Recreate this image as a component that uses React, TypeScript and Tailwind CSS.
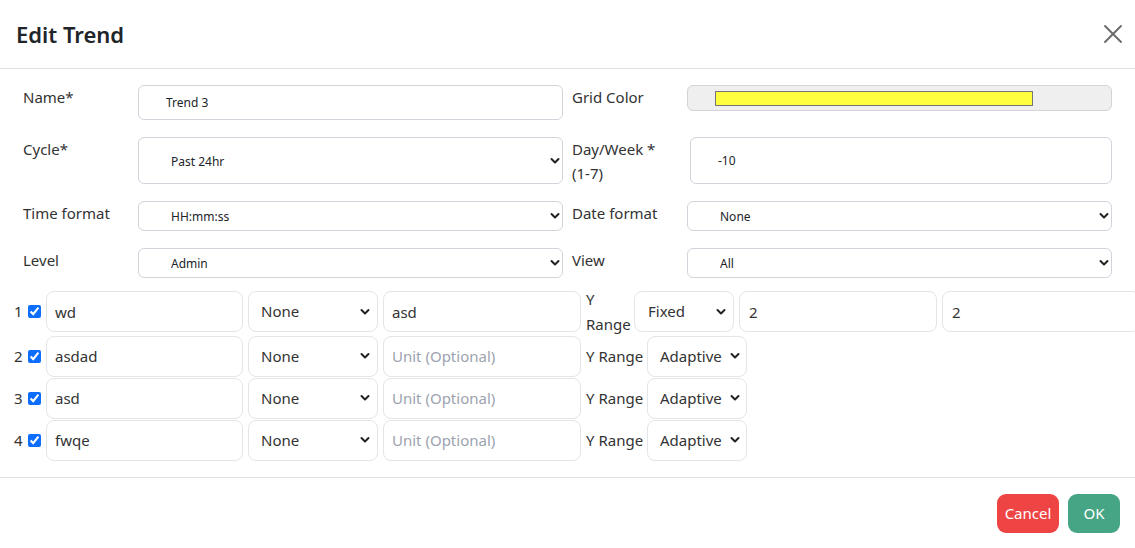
import { X } from "lucide-react";

function Chevron({ className }: { className?: string }) {
  return (
    <svg
      className={className}
      width="10"
      height="7"
      viewBox="0 0 10 7"
      fill="none"
    >
      <path
        d="M1.5 1.5 L5 5 L8.5 1.5"
        stroke="#222"
        strokeWidth="2"
        strokeLinecap="round"
        strokeLinejoin="round"
      />
    </svg>
  );
}

type SelectProps = {
  value: string;
  options: string[];
  className: string;
  selectClass: string;
  chevronClass: string;
};

function Select({ value, options, className, selectClass, chevronClass }: SelectProps) {
  return (
    <div className={`relative shrink-0 ${className}`}>
      <select
        defaultValue={value}
        className={`h-full w-full appearance-none bg-white outline-none ${selectClass}`}
      >
        {options.map((o) => (
          <option key={o} value={o}>
            {o}
          </option>
        ))}
      </select>
      <Chevron className={`pointer-events-none absolute top-1/2 -translate-y-1/2 ${chevronClass}`} />
    </div>
  );
}

const topSelect = "rounded-md border border-[#d1d5db] pl-[32px] pt-[2px] text-[12px] text-[#212529]";
const chanInput =
  "h-[41px] shrink-0 rounded-lg border border-[#e3e5e8] bg-white text-[15px] text-[#333] outline-none placeholder:text-[#9ca3af]";
const chanSelect = "rounded-lg border border-[#e3e5e8] text-[15px] text-[#333]";

type Channel = {
  id: number;
  name: string;
  unit: string;
  range: string;
  min?: string;
  max?: string;
};

const channels: Channel[] = [
  { id: 1, name: "wd", unit: "asd", range: "Fixed", min: "2", max: "2" },
  { id: 2, name: "asdad", unit: "", range: "Adaptive" },
  { id: 3, name: "asd", unit: "", range: "Adaptive" },
  { id: 4, name: "fwqe", unit: "", range: "Adaptive" },
];

export default function App() {
  return (
    <div className="flex h-[548px] w-[1135px] flex-col overflow-hidden bg-white font-['Noto_Sans','Open_Sans',sans-serif] text-[#333]">
      {/* Header */}
      <div className="flex h-[69px] shrink-0 items-center justify-between border-b border-[#dee2e6] pl-[16px] pr-[6px]">
        <h1 className="text-[22px] font-semibold text-[#212529]">Edit Trend</h1>
        <X className="h-[32px] w-[32px] text-[#6b6b6b]" strokeWidth={1.4} />
      </div>

      {/* Body */}
      <div className="flex flex-col gap-[17px] px-[23px] pt-[16px] text-[15px] leading-[24px]">
        <div className="flex h-[35px] items-start">
          <div className="w-[115px] shrink-0">Name*</div>
          <input
            defaultValue="Trend 3"
            className="h-[35px] w-[425px] shrink-0 rounded-md border border-[#d1d5db] pl-[27px] text-[12px] text-[#212529] outline-none"
          />
          <div className="ml-[9px] w-[115px] shrink-0">Grid Color</div>
          <div className="flex h-[26px] w-[425px] shrink-0 items-center rounded-md border border-[#d4d4d8] bg-[#efefef] pl-[27px]">
            <div className="h-[15px] w-[318px] border border-[#767676] bg-[#ffff40]" />
          </div>
        </div>

        <div className="flex h-[47px] items-start">
          <div className="w-[115px] shrink-0">Cycle*</div>
          <Select
            value="Past 24hr"
            options={["Past 24hr", "Past week"]}
            className="h-[47px] w-[425px]"
            selectClass={topSelect}
            chevronClass="right-[3px]"
          />
          <div className="ml-[9px] w-[118px] shrink-0">
            Day/Week *<br />
            (1-7)
          </div>
          <input
            defaultValue="-10"
            className="h-[47px] w-[422px] shrink-0 rounded-md border border-[#d1d5db] pl-[27px] text-[12px] text-[#212529] outline-none"
          />
        </div>

        <div className="flex h-[30px] items-start">
          <div className="w-[115px] shrink-0">Time format</div>
          <Select
            value="HH:mm:ss"
            options={["HH:mm:ss", "HH:mm"]}
            className="h-[30px] w-[425px]"
            selectClass={topSelect}
            chevronClass="right-[3px]"
          />
          <div className="ml-[9px] w-[115px] shrink-0">Date format</div>
          <Select
            value="None"
            options={["None", "YYYY-MM-DD"]}
            className="h-[30px] w-[425px]"
            selectClass={topSelect}
            chevronClass="right-[3px]"
          />
        </div>

        <div className="flex h-[30px] items-start">
          <div className="w-[115px] shrink-0">Level</div>
          <Select
            value="Admin"
            options={["Admin", "User"]}
            className="h-[30px] w-[425px]"
            selectClass={topSelect}
            chevronClass="right-[3px]"
          />
          <div className="ml-[9px] w-[115px] shrink-0">View</div>
          <Select
            value="All"
            options={["All", "Mine"]}
            className="h-[30px] w-[425px]"
            selectClass={topSelect}
            chevronClass="right-[3px]"
          />
        </div>
      </div>

      {/* Channels */}
      <div className="mt-[10px] flex flex-col pl-[14px] text-[15px]">
        {channels.map((c) => (
          <div
            key={c.id}
            className={`flex items-center gap-[5px] ${c.id === 1 ? "h-[47px]" : "h-[42px]"}`}
          >
            <span className="w-[9px] shrink-0 text-[15px]">{c.id}</span>
            <input
              type="checkbox"
              defaultChecked
              className="h-[13px] w-[13px] shrink-0 accent-[#0d6efd]"
            />
            <input defaultValue={c.name} className={`${chanInput} w-[197px] pl-[8px]`} />
            <Select
              value="None"
              options={["None", "Avg"]}
              className="h-[41px] w-[130px]"
              selectClass={`${chanSelect} pl-[12px]`}
              chevronClass="right-[8px]"
            />
            <input
              defaultValue={c.unit}
              placeholder="Unit (Optional)"
              className={`${chanInput} w-[198px] pl-[8px]`}
            />
            {c.range === "Fixed" ? (
              <>
                <div className="w-[43px] shrink-0 leading-[25px]">
                  Y<br />
                  Range
                </div>
                <Select
                  value="Fixed"
                  options={["Fixed", "Adaptive"]}
                  className="h-[41px] w-[100px]"
                  selectClass={`${chanSelect} pl-[13px]`}
                  chevronClass="right-[8px]"
                />
                <input defaultValue={c.min} className={`${chanInput} w-[198px] pl-[9px]`} />
                <input defaultValue={c.max} className={`${chanInput} w-[198px] pl-[9px]`} />
              </>
            ) : (
              <>
                <div className="w-[56px] shrink-0 whitespace-nowrap">Y Range</div>
                <Select
                  value="Adaptive"
                  options={["Adaptive", "Fixed"]}
                  className="h-[41px] w-[100px]"
                  selectClass={`${chanSelect} pl-[12px]`}
                  chevronClass="right-[7px]"
                />
              </>
            )}
          </div>
        ))}
      </div>

      {/* Footer */}
      <div className="mt-[16px] flex flex-1 items-start justify-end gap-[9px] border-t border-[#dee2e6] pr-[15px] pt-[16px]">
        <button className="h-[39px] w-[62px] rounded-[9px] bg-[#ef4444] text-[15px] text-white">
          Cancel
        </button>
        <button className="h-[39px] w-[52px] rounded-[9px] bg-[#46a584] text-[15px] text-white">
          OK
        </button>
      </div>
    </div>
  );
}
